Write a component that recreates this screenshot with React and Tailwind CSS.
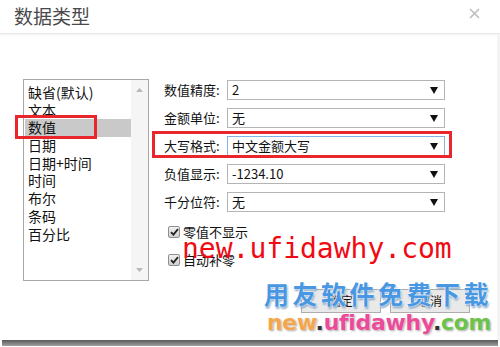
import React from 'react';

const items = ['缺省(默认)', '文本', '数值', '日期', '日期+时间', '时间', '布尔', '条码', '百分比'];

const rows = [
  { label: '数值精度:', value: '2' },
  { label: '金额单位:', value: '无' },
  { label: '大写格式:', value: '中文金额大写', focus: true },
  { label: '负值显示:', value: '-1234.10' },
  { label: '千分位符:', value: '无' },
];

function Check({ label }) {
  return (
    <div className="flex items-center h-[20px]">
      <span className="w-[12px] h-[12px] rounded-[2px] border border-[#8f8f8f] bg-gradient-to-b from-[#f2f2f2] to-[#cfcfcf] flex items-center justify-center">
        <svg width="9" height="8" viewBox="0 0 9 8">
          <path d="M1 4.2 L3.4 6.6 L8 1.2" fill="none" stroke="#222" strokeWidth="1.8" />
        </svg>
      </span>
      <span className="ml-[3px] text-[13px] text-[#111]">{label}</span>
    </div>
  );
}

export default function App() {
  return (
    <div className="w-[500px] h-[347px] bg-white relative overflow-hidden flex flex-col" style={{ fontFamily: '"Noto Sans CJK SC", "Liberation Sans", sans-serif' }}>
      {/* header */}
      <div className="h-[34px] shrink-0 border-b border-[#e8e8e8] shadow-[0_1px_2px_#f0f0f0] flex items-center justify-between pl-[14px] pr-[20px]">
        <span className="text-[19px] text-[#4a4a4a] leading-none -mt-[3px]">数据类型</span>
        <svg width="11" height="11" viewBox="0 0 11 11" className="-mt-[6px]">
          <path d="M1 1 L10 10 M10 1 L1 10" stroke="#bdbdbd" strokeWidth="1.6" />
        </svg>
      </div>

      {/* body */}
      <div className="flex-1 flex pt-[45px] pl-[23px] border-r-[3px] border-r-[#f4f4f4]">
        {/* list box */}
        <div className="w-[126px] h-[202px] border border-[#a8a8a8] flex">
          <div className="flex-1 pt-[4px] pl-[1px]">
            {items.map((it, i) => (
              <div key={it} className={`h-[17.7px] leading-[17.7px] pl-[3px] text-[14px] text-[#111] ${i === 2 ? 'bg-[#c9c9c9]' : ''}`}>{it}</div>
            ))}
          </div>
          <div className="w-[17px] bg-[#f5f5f5] flex flex-col items-center justify-between py-[8px]">
            <svg width="7" height="4" viewBox="0 0 7 4"><path d="M0 4 L3.5 0 L7 4 Z" fill="#b8b8b8" /></svg>
            <svg width="7" height="4" viewBox="0 0 7 4"><path d="M0 0 L3.5 4 L7 0 Z" fill="#b8b8b8" /></svg>
          </div>
        </div>

        {/* form */}
        <div className="ml-[15px] pt-[1px] flex flex-col">
          <div className="flex flex-col gap-[8px]">
            {rows.map((r) => (
              <div key={r.label} className="flex items-center h-[20px]">
                <span className="w-[63px] text-[13px] text-[#111]">{r.label}</span>
                <div className={`w-[218px] h-[20px] border ${r.focus ? 'border-[#80b4e8]' : 'border-[#b4b4b4]'} flex items-center justify-between pl-[4px] pr-[6px] bg-white`}>
                  <span className="text-[13px] text-[#111]">{r.value}</span>
                  <svg width="8" height="7" viewBox="0 0 8 7"><path d="M0 0 L8 0 L4 7 Z" fill="#111" /></svg>
                </div>
              </div>
            ))}
          </div>
          <div className="mt-[10px] pl-[4px] flex flex-col gap-[8px]">
            <Check label="零值不显示" />
            <Check label="自动补零" />
          </div>
          <div className="mt-[19px] ml-[137px] flex gap-[9px]">
            <div className="w-[80px] h-[24px] border border-[#adadad] bg-[#e9e9e9] flex items-center justify-center text-[12px] text-[#111]">确定</div>
            <div className="w-[80px] h-[24px] border border-[#adadad] bg-[#e9e9e9] flex items-center justify-center text-[12px] text-[#111]">取消</div>
          </div>
        </div>
      </div>

      {/* dialog bottom edge */}
      <div className="h-[6px] mx-[2px] mb-[1px] shrink-0 bg-gradient-to-b from-[#5a5a5a] to-[#a0a0a0]" />

      {/* annotation boxes */}
      <div className="absolute left-[15px] top-[115px] w-[82px] h-[24px] border-[3px] border-[#e8262b]" />
      <div className="absolute left-[152px] top-[131px] w-[300px] h-[27px] border-[3px] border-[#e8262b]" />

      {/* watermarks */}
      <div className="absolute left-[182px] top-[235px] text-[28px] leading-none text-[#f00a14]" style={{ fontFamily: '"DejaVu Sans Mono", monospace' }}>new.ufidawhy.com</div>
      <div className="absolute left-[264px] top-[281px] text-[25px] leading-none font-bold tracking-[3.5px] text-[#4797e2] [text-shadow:0_0_2px_#fff,0_0_2px_#fff,1px_2px_2px_#7a9bbf]">用友软件免费下载</div>
      <div className="absolute left-[267px] top-[312px] text-[22px] leading-none font-bold tracking-[-0.3px] [text-shadow:0_0_2px_#fff,1px_1px_2px_#999]" style={{ fontFamily: '"DejaVu Sans", sans-serif' }}>
        <span className="text-[#f3a64a]">new</span>
        <span className="text-[#333]">.</span>
        <span className="text-[#ec4a9a]">ufidawhy</span>
        <span className="text-[#333]">.</span>
        <span className="text-[#6cc24a]">com</span>
      </div>
    </div>
  );
}
